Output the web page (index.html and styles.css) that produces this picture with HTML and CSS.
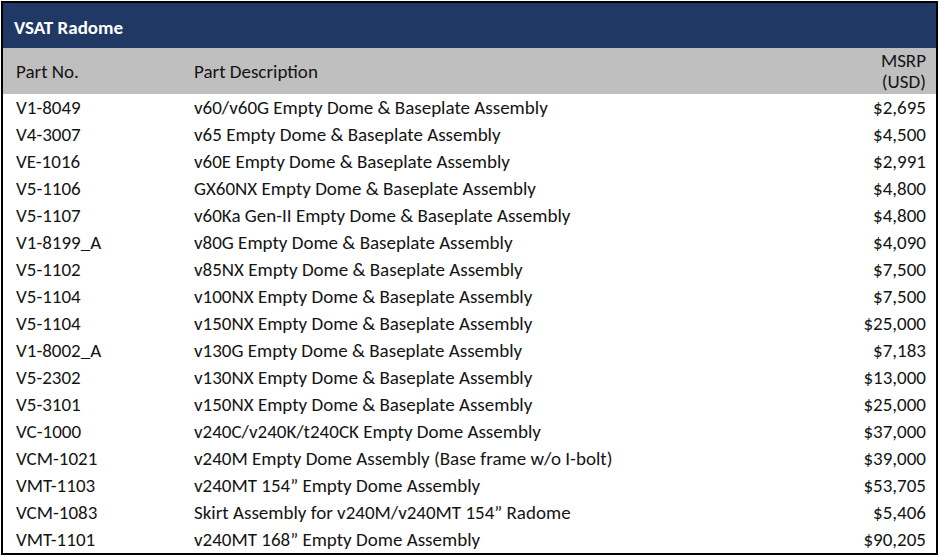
FILE: index.html
```html
<!DOCTYPE html>
<html lang="en">
<head>
  <meta charset="UTF-8">
  <meta name="viewport" content="width=device-width, initial-scale=1.0">
  <title>VSAT Radome</title>
  <link rel="stylesheet" href="styles.css">
</head>
<body>
  <div class="sheet">
    <div class="title">VSAT Radome</div>
    <table class="parts">
      <thead>
        <tr>
          <th class="col-no">Part No.</th>
          <th class="col-desc">Part Description</th>
          <th class="col-price"><span class="line">MSRP</span><span class="line">(USD)</span></th>
        </tr>
      </thead>
      <tbody>
        <tr><td>V1-8049</td><td>v60/v60G Empty Dome &amp; Baseplate Assembly</td><td class="price">$2,695</td></tr>
        <tr><td>V4-3007</td><td>v65 Empty Dome &amp; Baseplate Assembly</td><td class="price">$4,500</td></tr>
        <tr><td>VE-1016</td><td>v60E Empty Dome &amp; Baseplate Assembly</td><td class="price">$2,991</td></tr>
        <tr><td>V5-1106</td><td>GX60NX Empty Dome &amp; Baseplate Assembly</td><td class="price">$4,800</td></tr>
        <tr><td>V5-1107</td><td>v60Ka Gen-II Empty Dome &amp; Baseplate Assembly</td><td class="price">$4,800</td></tr>
        <tr><td>V1-8199_A</td><td>v80G Empty Dome &amp; Baseplate Assembly</td><td class="price">$4,090</td></tr>
        <tr><td>V5-1102</td><td>v85NX Empty Dome &amp; Baseplate Assembly</td><td class="price">$7,500</td></tr>
        <tr><td>V5-1104</td><td>v100NX Empty Dome &amp; Baseplate Assembly</td><td class="price">$7,500</td></tr>
        <tr><td>V5-1104</td><td>v150NX Empty Dome &amp; Baseplate Assembly</td><td class="price">$25,000</td></tr>
        <tr><td>V1-8002_A</td><td>v130G Empty Dome &amp; Baseplate Assembly</td><td class="price">$7,183</td></tr>
        <tr><td>V5-2302</td><td>v130NX Empty Dome &amp; Baseplate Assembly</td><td class="price">$13,000</td></tr>
        <tr><td>V5-3101</td><td>v150NX Empty Dome &amp; Baseplate Assembly</td><td class="price">$25,000</td></tr>
        <tr><td>VC-1000</td><td>v240C/v240K/t240CK Empty Dome Assembly</td><td class="price">$37,000</td></tr>
        <tr><td>VCM-1021</td><td>v240M Empty Dome Assembly (Base frame w/o I-bolt)</td><td class="price">$39,000</td></tr>
        <tr><td>VMT-1103</td><td>v240MT 154” Empty Dome Assembly</td><td class="price">$53,705</td></tr>
        <tr><td>VCM-1083</td><td>Skirt Assembly for v240M/v240MT 154” Radome</td><td class="price">$5,406</td></tr>
        <tr><td>VMT-1101</td><td>v240MT 168” Empty Dome Assembly</td><td class="price">$90,205</td></tr>
      </tbody>
    </table>
  </div>
</body>
</html>
```

FILE: styles.css
```css
body{
  margin: 0;
  background: #fff;
}

.sheet{
  width: 933px;
  margin: 1px 0 0 1px;
  border: 2px solid #000;
  font-family: "Carlito", "Lato", "Liberation Sans", sans-serif;
  font-size: 19px;
  color: #141414;
}

.title{
  height: 45px;
  display: flex;
  align-items: center;
  padding-left: 11px;
  padding-top: 3px;
  box-sizing: border-box;
  background: #203864;
  color: #fff;
  font-weight: bold;
}

.parts{
  width: 100%;
  border-collapse: collapse;
  table-layout: fixed;
}

.parts th,
.parts td{
  box-sizing: border-box;
  padding: 0;
}

.parts th{
  height: 46px;
  background: #bfbfbf;
  font-weight: normal;
  text-align: left;
  line-height: 22px;
  padding-top: 2px;
}

.parts th .line{
  display: block;
  height: 20px;
  line-height: 20px;
}

.parts td{
  height: 27px;
  line-height: 26px;
  padding-top: 1px;
  white-space: nowrap;
}

.parts .col-no{
  width: 179px;
}
.parts .col-price{
  width: 143px;
  text-align: right;
  vertical-align: top;
  padding-top: 3px;
}
.parts .col-price .line + .line{
  margin-top: 1px;
}

.parts tr > :first-child{
  padding-left: 13px;
}
.parts tr > :nth-child(2){
  padding-left: 12px;
}
.parts tr > :last-child{
  padding-right: 10px;
}

.parts .price{
  text-align: right;
}
```
